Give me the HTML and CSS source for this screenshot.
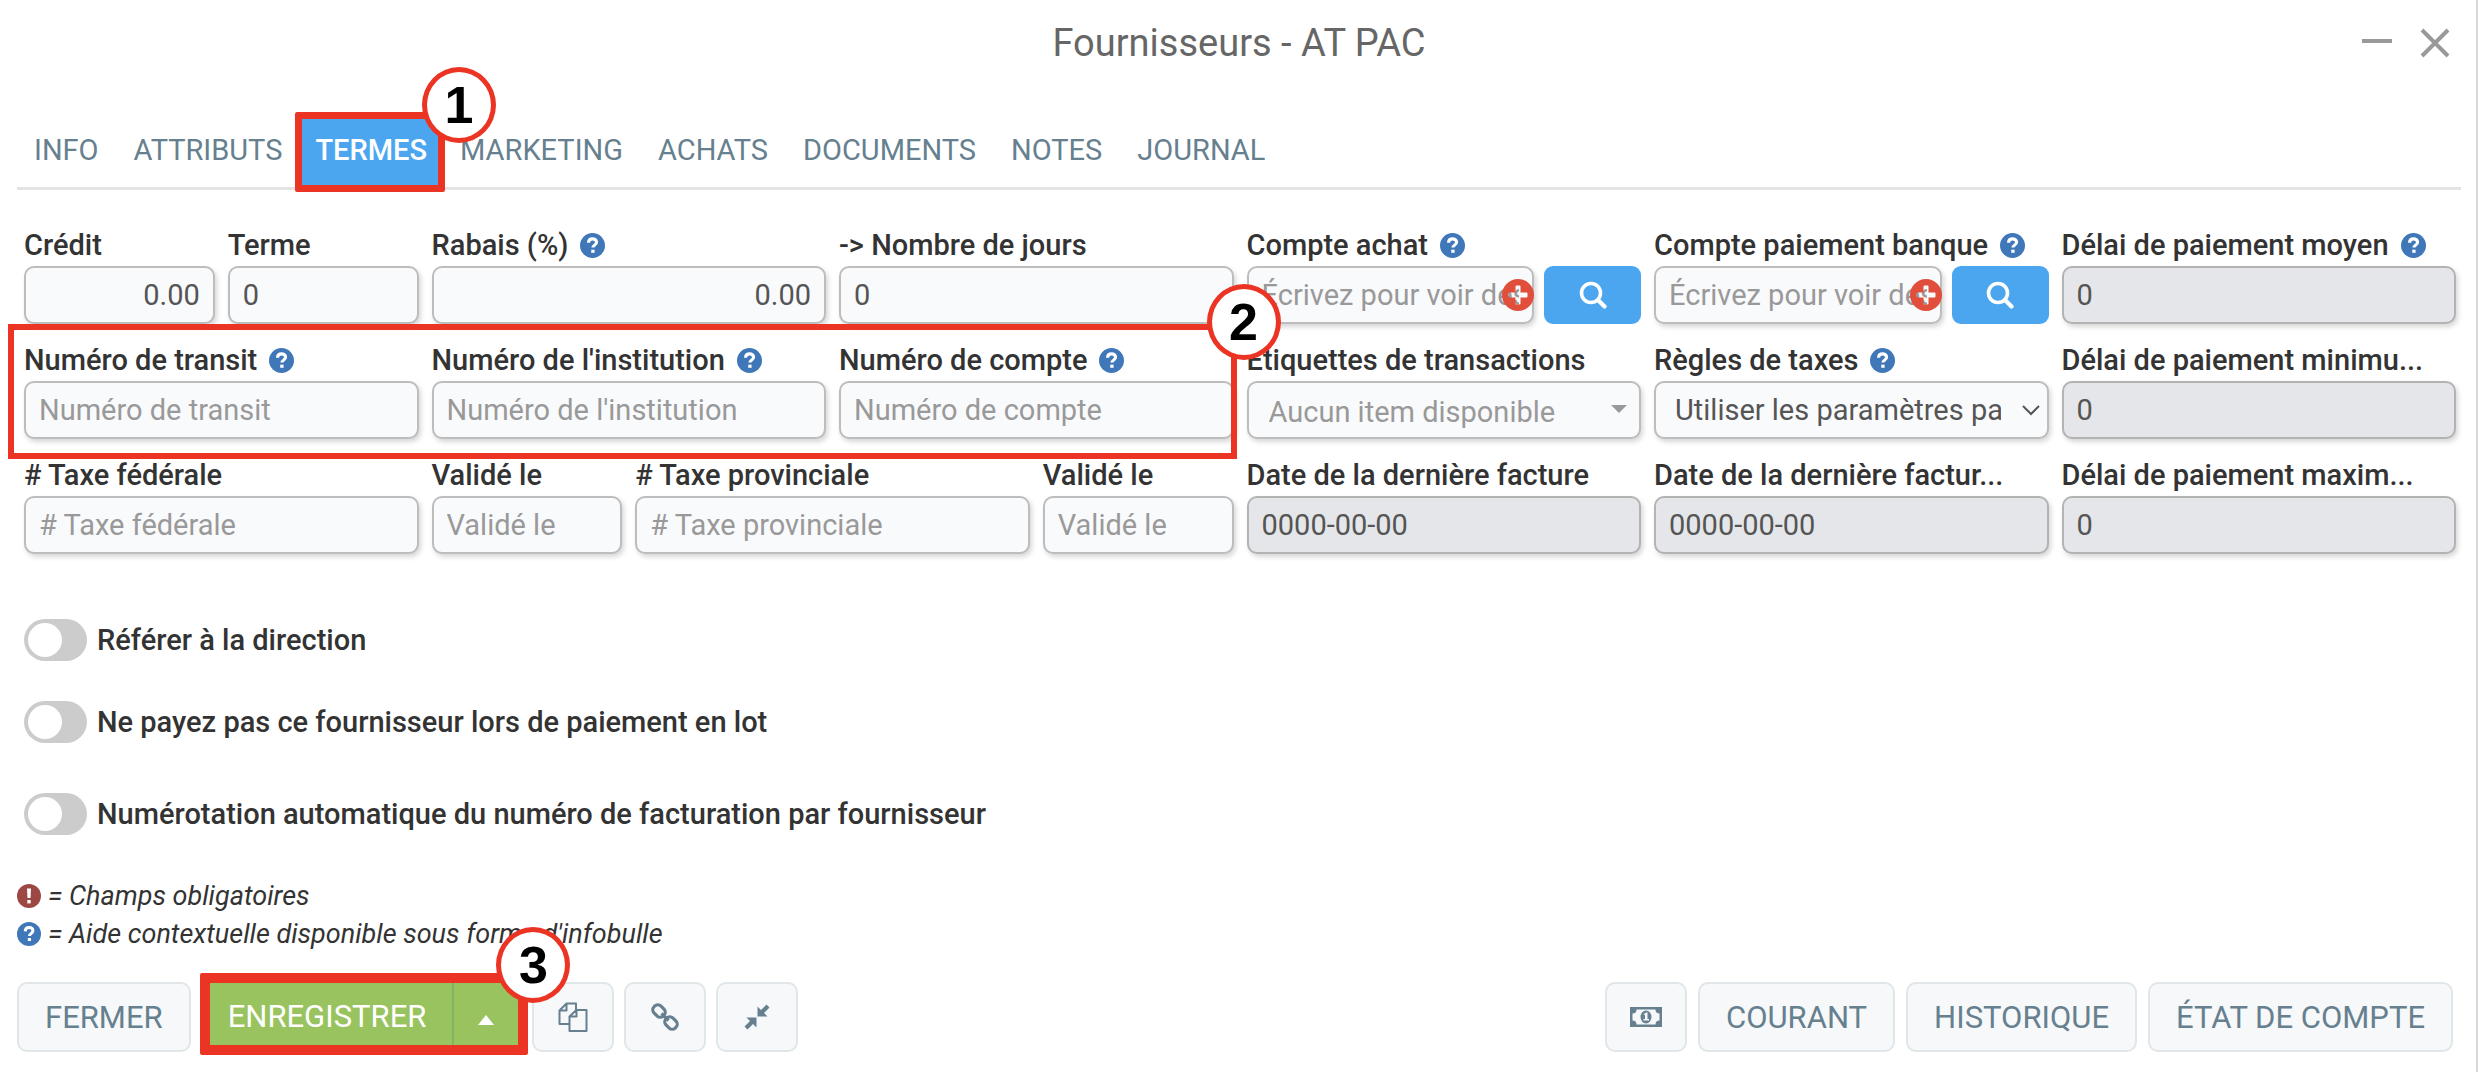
FILE: index.html
```html
<!DOCTYPE html>
<html lang="fr">
<head>
<meta charset="utf-8">
<title>Fournisseurs - AT PAC</title>
<link rel="stylesheet" href="styles.css">
</head>
<body>
<svg class="sprite" aria-hidden="true">
  <symbol id="help" viewBox="0 0 24 24"><circle cx="12" cy="12" r="12" fill="#3f77b8"/><path d="M8.2 9.4C8.3 6.9 9.900 5.600 12.100 5.600s3.800 1.300 3.800 3.200c0 2.700-3.500 2.900-3.500 5.200" fill="none" stroke="#fff" stroke-width="3"/><rect x="10.800" y="16" width="3.200" height="3" fill="#fff"/></symbol>
  <symbol id="search" viewBox="0 0 28 28"><circle cx="12" cy="12" r="9.500" fill="none" stroke="#fff" stroke-width="3.600"/><path d="M19 19l6.500 6.500" stroke="#fff" stroke-width="4.200" stroke-linecap="round"/></symbol>
  <symbol id="plus" viewBox="0 0 32 32"><path fill="#e14e3b" fill-rule="evenodd" d="M16 0a16 16 0 1 1 0 32a16 16 0 1 1 0-32zM14.500 6.500a1 1 0 0 0-1 1v6h-6a1 1 0 0 0-1 1v3a1 1 0 0 0 1 1h6v6a1 1 0 0 0 1 1h3a1 1 0 0 0 1-1v-6h6a1 1 0 0 0 1-1v-3a1 1 0 0 0-1-1h-6v-6a1 1 0 0 0-1-1z"/></symbol>
</svg>
<main class="window">
  <header class="titlebar">
    <h1 class="title">Fournisseurs - AT PAC</h1>
    <div class="window-controls">
      <button class="window-button" aria-label="Réduire"><svg width="30" height="30" viewBox="0 0 30 30"><path d="M0 13h30" stroke="#999" stroke-width="4"/></svg></button>
      <button class="window-button" aria-label="Fermer la fenêtre"><svg width="30" height="30" viewBox="0 0 30 30"><path d="M2 2l26 26M28 2L2 28" stroke="#999" stroke-width="4"/></svg></button>
    </div>
  </header>

  <nav class="tabs">
    <a class="tab" href="#info">INFO</a>
    <a class="tab" href="#attributs">ATTRIBUTS</a>
    <a class="tab tab-active" href="#termes">TERMES<span class="step step-tab">1</span></a>
    <a class="tab" href="#marketing">MARKETING</a>
    <a class="tab" href="#achats">ACHATS</a>
    <a class="tab" href="#documents">DOCUMENTS</a>
    <a class="tab" href="#notes">NOTES</a>
    <a class="tab" href="#journal">JOURNAL</a>
  </nav>

  <form class="fields">
    <div class="field"><label class="label" for="credit">Crédit</label><input class="input input-number" id="credit" value="0.00"></div>
    <div class="field"><label class="label" for="terme">Terme</label><input class="input" id="terme" value="0"></div>
    <div class="field wide"><label class="label" for="rabais">Rabais (%) <svg class="help"><use href="#help"/></svg></label><input class="input input-number" id="rabais" value="0.00"></div>
    <div class="field wide"><label class="label" for="jours">-&gt; Nombre de jours</label><input class="input" id="jours" value="0"></div>
    <div class="field wide"><label class="label" for="achat">Compte achat <svg class="help"><use href="#help"/></svg></label>
      <div class="lookup"><div class="lookup-box"><input class="input" id="achat" placeholder="Écrivez pour voir des choix"><svg class="plus"><use href="#plus"/></svg></div><button class="search" type="button" aria-label="Rechercher un compte achat"><svg class="search-icon"><use href="#search"/></svg></button></div></div>
    <div class="field wide"><label class="label" for="banque">Compte paiement banque <svg class="help"><use href="#help"/></svg></label>
      <div class="lookup"><div class="lookup-box"><input class="input" id="banque" placeholder="Écrivez pour voir des choix"><svg class="plus"><use href="#plus"/></svg></div><button class="search" type="button" aria-label="Rechercher un compte banque"><svg class="search-icon"><use href="#search"/></svg></button></div></div>
    <div class="field wide"><label class="label" for="moyen">Délai de paiement moyen <svg class="help"><use href="#help"/></svg></label><input class="input" id="moyen" value="0" readonly></div>

    <div class="field wide"><label class="label" for="transit">Numéro de transit <svg class="help"><use href="#help"/></svg></label><input class="input" id="transit" placeholder="Numéro de transit"></div>
    <div class="field wide"><label class="label" for="institution">Numéro de l'institution <svg class="help"><use href="#help"/></svg></label><input class="input" id="institution" placeholder="Numéro de l'institution"></div>
    <div class="field wide"><label class="label" for="compte">Numéro de compte <svg class="help"><use href="#help"/></svg></label><input class="input" id="compte" placeholder="Numéro de compte"></div>
    <div class="field wide"><label class="label" for="etiquettes">Étiquettes de transactions</label><select class="input select select-tags" id="etiquettes"><option>Aucun item disponible</option></select></div>
    <div class="field wide"><label class="label" for="taxes">Règles de taxes <svg class="help"><use href="#help"/></svg></label><select class="input select select-rules" id="taxes"><option>Utiliser les paramètres par défaut</option></select></div>
    <div class="field wide"><label class="label" for="minimum">Délai de paiement minimu...</label><input class="input" id="minimum" value="0" readonly></div>

    <div class="field wide"><label class="label" for="federale"># Taxe fédérale</label><input class="input" id="federale" placeholder="# Taxe fédérale"></div>
    <div class="field"><label class="label" for="valide1">Validé le</label><input class="input" id="valide1" placeholder="Validé le"></div>
    <div class="field wide"><label class="label" for="provinciale"># Taxe provinciale</label><input class="input" id="provinciale" placeholder="# Taxe provinciale"></div>
    <div class="field"><label class="label" for="valide2">Validé le</label><input class="input" id="valide2" placeholder="Validé le"></div>
    <div class="field wide"><label class="label" for="facture">Date de la dernière facture</label><input class="input" id="facture" value="0000-00-00" readonly></div>
    <div class="field wide"><label class="label" for="facture2">Date de la dernière factur...</label><input class="input" id="facture2" value="0000-00-00" readonly></div>
    <div class="field wide"><label class="label" for="maximum">Délai de paiement maxim...</label><input class="input" id="maximum" value="0" readonly></div>

    <div class="highlight"><span class="step step-fields">2</span></div>
  </form>

  <section class="toggles">
    <label class="toggle"><input class="switch" type="checkbox">Référer à la direction</label>
    <label class="toggle"><input class="switch" type="checkbox">Ne payez pas ce fournisseur lors de paiement en lot</label>
    <label class="toggle toggle-spaced"><input class="switch" type="checkbox">Numérotation automatique du numéro de facturation par fournisseur</label>
  </section>

  <section class="legend">
    <p class="legend-line"><svg class="legend-icon" viewBox="0 0 24 24"><circle cx="12" cy="12" r="12" fill="#9c4743"/><path d="M10 4.500h4l-.5 9.500h-3z" fill="#fff"/><rect x="10.300" y="16" width="3.400" height="3.400" fill="#fff"/></svg>= Champs obligatoires</p>
    <p class="legend-line"><svg class="legend-icon"><use href="#help"/></svg>= Aide contextuelle disponible sous forme d'infobulle</p>
  </section>

  <footer class="actions">
    <div class="action-group">
      <button class="button">FERMER</button>
      <div class="save-group">
        <button class="save">ENREGISTRER</button><button class="save save-more" aria-label="Autres options"><svg width="16" height="10" viewBox="0 0 16 10"><path d="M0 10L8 0l8 10z" fill="#fff"/></svg></button>
        <span class="step step-save">3</span>
      </div>
      <button class="button button-icon" aria-label="Copier"><svg width="30" height="30" viewBox="0 0 30 30" fill="none" stroke="#66808f" stroke-width="2" stroke-linejoin="round"><path d="M11 22H1.500V8.500L8.500 1.500H18V8M8.500 1.500v7h-7"/><path d="M11.500 14.500L18.500 8h10v21h-17zM18.500 8v6.500h-7"/></svg></button>
      <button class="button button-icon" aria-label="Lier"><svg width="28" height="28" viewBox="0 0 28 28" fill="none" stroke="#66808f" stroke-width="3.200"><rect x="-6.500" y="-4.800" width="13" height="9.600" rx="4.200" transform="translate(8 8) rotate(45)"/><rect x="-6.500" y="-4.800" width="13" height="9.600" rx="4.200" transform="translate(20 20) rotate(45)"/><path d="M10.500 10.500l7 7"/></svg></button>
      <button class="button button-icon" aria-label="Réduire la fiche"><svg width="26" height="26" viewBox="0 0 26 26" fill="#66808f"><path d="M13.500 12.500V2.500l3.500 3.500 5.500-5.500 3 3L20 9l3.500 3.500zM12.500 13.500v10L9 20l-5.500 5.500-3-3L6 17l-3.500-3.500z"/></svg></button>
    </div>
    <div class="action-group action-group-end">
      <button class="button button-icon" aria-label="Paiements"><svg width="32" height="20" viewBox="0 0 32 20"><rect width="32" height="20" fill="#66808f"/><path d="M6.500 2.500h19a4 4 0 0 0 4 4v7a4 4 0 0 0-4 4h-19a4 4 0 0 0-4-4v-7a4 4 0 0 0 4-4z" fill="#f6f8fa"/><ellipse cx="16" cy="10" rx="5.500" ry="6.500" fill="#66808f"/><path d="M13.500 7.500l2.500-2h1.500V12H19v1.500h-5.500V12h1.500V8z" fill="#f6f8fa"/></svg></button>
      <button class="button">COURANT</button>
      <button class="button">HISTORIQUE</button>
      <button class="button">ÉTAT DE COMPTE</button>
    </div>
  </footer>
</main>
</body>
</html>
```
FILE: styles.css
```css
* { box-sizing: border-box; }
body { margin: 0; background: #fff; color: #333; font-family: Roboto, sans-serif; font-size: 29px; }
button, input, select { font: inherit; color: inherit; margin: 0; }
button { cursor: pointer; }
.sprite { position: absolute; width: 0; height: 0; }
.window { min-height: 100vh; padding: 0 15px 0 17px; border-right: 2px solid #d9d9d9; }

.titlebar { display: grid; grid-template-columns: 1fr auto 1fr; align-items: center; height: 86px; }
.title { grid-column: 2; margin: 0; font-size: 38px; font-weight: 400; color: #666; }
.window-controls { display: flex; gap: 28px; justify-self: end; padding-right: 11px; }
.window-button { display: block; padding: 0; border: 0; background: none; line-height: 0; }

.tabs { display: flex; height: 104px; padding-top: 27px; border-bottom: 3px solid #e4e4e4; }
.tab { position: relative; height: 74px; padding: 0 18px 0 17px; line-height: 74px; color: #66808f; text-decoration: none; }
.tab-active { height: 80px; margin: -1px -2px 0 -5px; padding: 0 11px 0 13px; border: 7px solid #ec3424; border-radius: 2px; background: #4ba6ef; color: #fff; font-weight: 500; line-height: 62px; }

/* Numbered markers of the walkthrough */
.step { position: absolute; z-index: 2; display: flex; align-items: center; justify-content: center; width: 74px; height: 76px; border: 5px solid #ec3424; border-radius: 50%; background: #fff; color: #000; font: bold 52px "Liberation Sans", Arial, sans-serif; }
.step-tab { top: -52px; right: -58px; }
.step-fields { top: -46px; right: -50px; }
.step-save { top: -56px; right: -52px; }

.fields { position: relative; display: grid; grid-template-columns: repeat(12, minmax(0, 1fr)); grid-template-rows: repeat(3, auto); gap: 17px 13px; padding: 36px 5px 0 7px; }
.field { min-width: 0; }
.wide { grid-column: span 2; }
.label { display: flex; align-items: center; gap: 12px; height: 38px; margin-bottom: 2px; font-weight: 500; white-space: nowrap; }
.help { flex: none; width: 25px; height: 25px; }
.input { display: block; width: 100%; height: 58px; padding: 0 13px; border: 2px solid #bdbdbd; border-radius: 10px; background: #f9fafc; box-shadow: 2px 3px 5px rgba(0, 0, 0, .16); color: #555; outline: 0; }
.input::placeholder { color: #999; opacity: 1; }
.input:read-only:not(select) { background: #e5e6ea; border-color: #b3b3b3; }
.input-number { text-align: right; }
.select { appearance: none; }
.select-tags { padding: 4px 60px 0 20px; color: #999; background: #f9fafc url("data:image/svg+xml,%3Csvg xmlns='http://www.w3.org/2000/svg' width='16' height='8'%3E%3Cpath d='M0 0h16L8 8z' fill='%23999'/%3E%3C/svg%3E") no-repeat right 12px top 22px; }
.select-rules { padding: 0 46px 0 19px; background: #f9fafc url("data:image/svg+xml,%3Csvg xmlns='http://www.w3.org/2000/svg' width='18' height='11'%3E%3Cpath d='M1 1l8 8 8-8' fill='none' stroke='%23555' stroke-width='2'/%3E%3C/svg%3E") no-repeat right 7px center; }
.lookup { display: flex; gap: 10px; }
.lookup-box { position: relative; flex: 1; min-width: 0; }
.plus { position: absolute; top: 13px; right: 0; width: 32px; height: 32px; }
.search { display: flex; align-items: center; justify-content: center; width: 97px; height: 58px; padding: 0; border: 0; border-radius: 9px; background: #4ba6ef; }
.search-icon { width: 28px; height: 28px; }
.highlight { position: absolute; grid-column: 1 / 7; grid-row: 2 / 3; inset: -17px -3px -20px -16px; border: 6px solid #ec3424; pointer-events: none; }

.toggles { display: flex; flex-direction: column; align-items: flex-start; gap: 40px; padding: 65px 7px 0; }
.toggle { display: flex; align-items: center; gap: 10px; height: 42px; font-weight: 500; }
.toggle-spaced { margin-top: 10px; }
.switch { appearance: none; width: 63px; height: 42px; padding: 4px; border-radius: 21px; background: #ccc; }
.switch::before { content: ""; display: block; width: 34px; height: 34px; border-radius: 50%; background: #fff; }

.legend { padding-top: 42px; }
.legend-line { display: flex; align-items: center; gap: 7px; height: 38px; margin: 0; font-size: 27px; font-style: italic; }
.legend-icon { width: 24px; height: 24px; }

.actions { display: flex; align-items: center; justify-content: space-between; padding: 26px 8px 10px 0; }
.action-group { display: flex; align-items: center; gap: 10px; }
.action-group-end { gap: 11px; }
.button { display: flex; align-items: center; justify-content: center; height: 70px; padding: 0 26px; border: 2px solid #e1e6e9; border-radius: 10px; background: #f6f8fa; color: #66808f; font-size: 31px; }
.button-icon { width: 82px; padding: 0; }
.save-group { position: relative; display: flex; height: 82px; margin: -6px -6px 0 -1px; border: 10px solid #ec3424; border-radius: 2px; }
.save { padding: 4px 26px 0 18px; border: 0; background: #98c35e; color: #fff; font-size: 31px; }
.save-more { width: 66px; padding: 0; border-left: 2px solid #7fb560; }
```
